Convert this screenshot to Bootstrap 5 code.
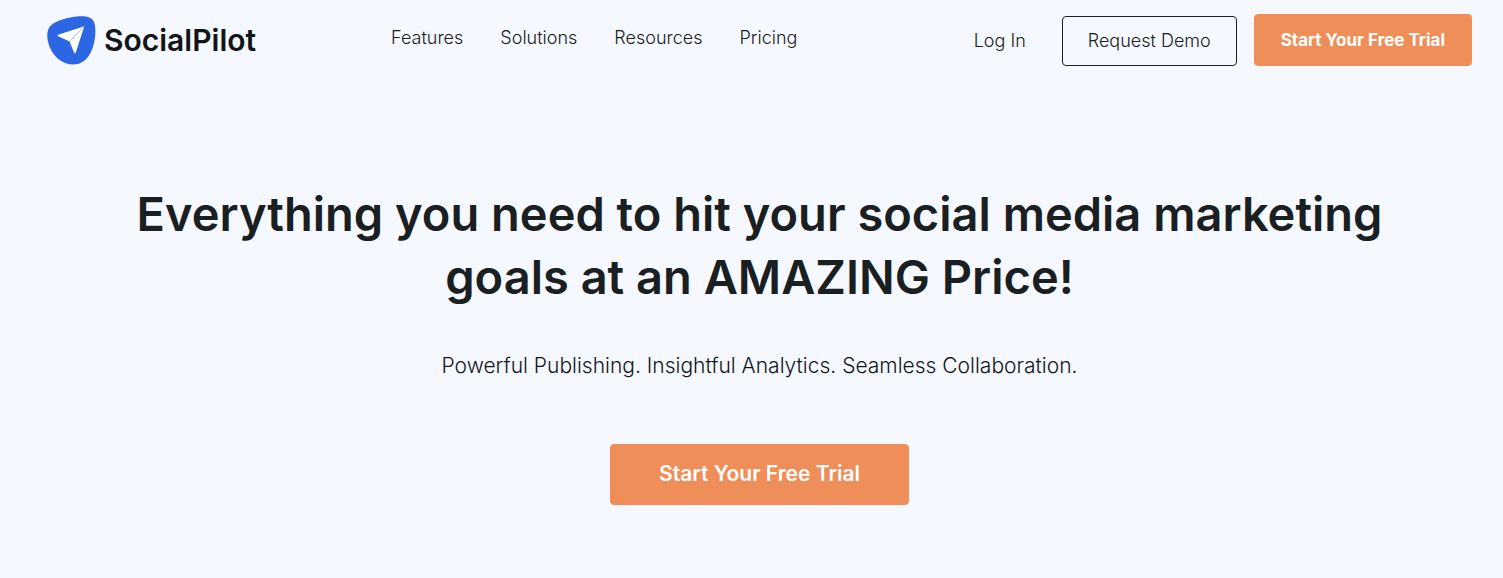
<!DOCTYPE html>
<html lang="en">
<head>
<meta charset="utf-8">
<meta name="viewport" content="width=device-width, initial-scale=1">
<title>SocialPilot Pricing</title>
<link href="https://cdn.jsdelivr.net/npm/bootstrap@5.3.0/dist/css/bootstrap.min.css" rel="stylesheet">
<style>
  body {
    background: #f5f8ff;
    color: #1a2021;
    font-family: Inter, "Liberation Sans", sans-serif;
    padding-left: 16px;
  }
  .site-header { padding: 14px 31px 0; }
  .site-header .navbar { --bs-navbar-nav-link-padding-x: 0; }
  .brand-mark { width: 49px; height: 49px; }
  .brand-name { font-size: 30px; font-weight: 600; line-height: 40px; color: #111518; }
  .site-header .nav-link { font-size: 18px; font-weight: 300; line-height: 24px; color: #1a2021; }
  .main-links { gap: 37px; padding-left: 135px; margin-bottom: 4px; }
  .site-header .login-link { margin-right: 36px; padding: 13px 0; }
  .btn { --bs-btn-border-radius: 4px; }
  .btn-demo {
    --bs-btn-color: #1a2021;
    --bs-btn-border-color: #1a2021;
    --bs-btn-hover-color: #f5f8ff;
    --bs-btn-hover-bg: #1a2021;
    font-size: 18px; font-weight: 300; line-height: 24px;
    padding: 12px 25px;
    margin-right: 17px;
  }
  .btn-trial {
    --bs-btn-color: #fff;
    --bs-btn-bg: #ef8e58;
    --bs-btn-border-color: #ef8e58;
    --bs-btn-hover-color: #fff;
    --bs-btn-hover-bg: #e57f46;
    --bs-btn-hover-border-color: #e57f46;
    font-size: 17px; font-weight: 700; line-height: 24px;
    padding: 13px 26px;
  }
  .hero { padding: 116px 31px 72px; }
  .hero h1 { font-size: 47px; font-weight: 600; line-height: 63px; max-width: 1320px; margin: 0 auto 42px; }
  .hero p { font-size: 21px; font-weight: 300; line-height: 32px; margin-bottom: 62px; color: #111518; }
  .hero .btn-trial { font-size: 21px; font-weight: 600; line-height: 32px; padding: 13px 48px 14px; }
</style>
</head>
<body>
<header class="site-header">
  <nav class="navbar navbar-expand-lg p-0 align-items-center" aria-label="Main">
    <a class="navbar-brand d-flex align-items-center gap-2 p-0 m-0" href="#">
      <svg class="brand-mark" viewBox="0 0 49 49" aria-hidden="true">
        <path fill="#2c66e3" d="M35 .3C41 .2 46.500 2 47.800 8.500C49.500 18 47.500 31 42 39.500C38 45.500 32.500 48.500 26 48.500C17 48.500 9.500 43 5 35.500C1 29 -1.300 19.500 1.500 13C5 5 22 .5 35 .3Z"/>
        <path fill="#fff" d="M37.300 10.200L11 18.800Q9.800 19.500 11 20.300L22.600 25.500L27 36.600Q28 37.900 28.800 36.500Z"/>
        <path fill="none" stroke="#8dadf0" stroke-width=".8" d="M36.500 11L22.600 25.500"/>
      </svg>
      <span class="brand-name">SocialPilot</span>
    </a>
    <ul class="navbar-nav flex-row main-links">
      <li class="nav-item"><a class="nav-link" href="#">Features</a></li>
      <li class="nav-item"><a class="nav-link" href="#">Solutions</a></li>
      <li class="nav-item"><a class="nav-link" href="#">Resources</a></li>
      <li class="nav-item"><a class="nav-link" href="#">Pricing</a></li>
    </ul>
    <div class="d-flex align-items-end ms-auto">
      <a class="nav-link login-link" href="#">Log In</a>
      <button type="button" class="btn btn-demo">Request Demo</button>
      <button type="button" class="btn btn-trial">Start Your Free Trial</button>
    </div>
  </nav>
</header>
<main class="hero text-center">
  <h1>Everything you need to hit your social media marketing goals at an AMAZING Price!</h1>
  <p>Powerful Publishing. Insightful Analytics. Seamless Collaboration.</p>
  <button type="button" class="btn btn-trial">Start Your Free Trial</button>
</main>
<script src="https://cdn.jsdelivr.net/npm/bootstrap@5.3.0/dist/js/bootstrap.bundle.min.js"></script>
</body>
</html>
